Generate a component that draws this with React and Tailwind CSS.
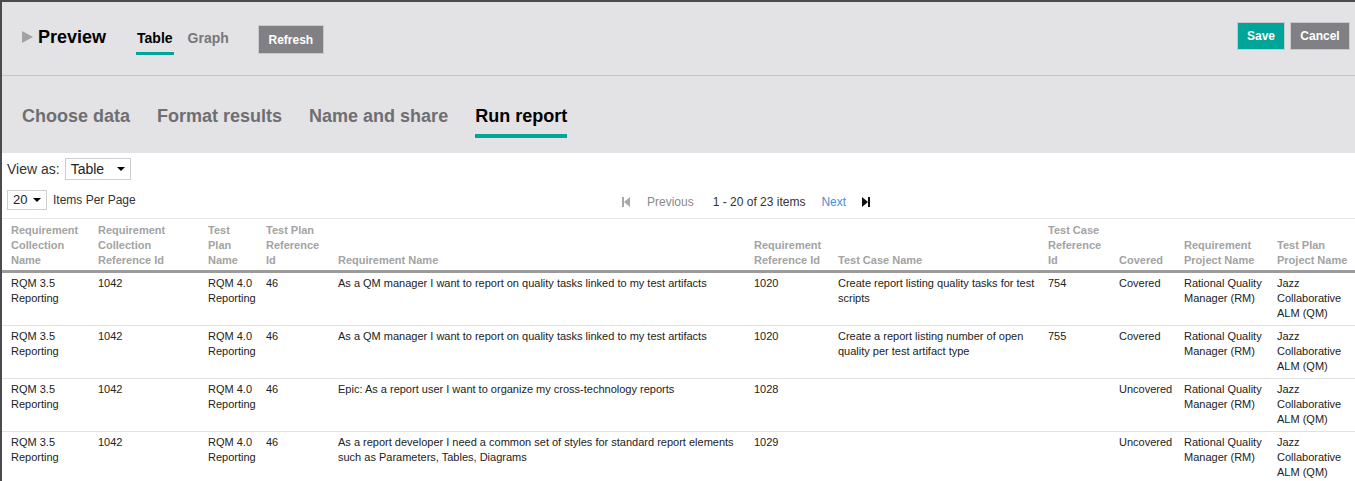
import React from "react";

const cols = [87, 110, 58, 72, 416, 84, 210, 71, 65, 93, 87];
const headers = [
  "Requirement Collection Name",
  "Requirement Collection Reference Id",
  "Test Plan Name",
  "Test Plan Reference Id",
  "Requirement Name",
  "Requirement Reference Id",
  "Test Case Name",
  "Test Case Reference Id",
  "Covered",
  "Requirement Project Name",
  "Test Plan Project Name",
];
const rows = [
  ["RQM 3.5 Reporting", "1042", "RQM 4.0 Reporting", "46", "As a QM manager I want to report on quality tasks linked to my test artifacts", "1020", "Create report listing quality tasks for test scripts", "754", "Covered", "Rational Quality Manager (RM)", "Jazz Collaborative ALM (QM)"],
  ["RQM 3.5 Reporting", "1042", "RQM 4.0 Reporting", "46", "As a QM manager I want to report on quality tasks linked to my test artifacts", "1020", "Create a report listing number of open quality per test artifact type", "755", "Covered", "Rational Quality Manager (RM)", "Jazz Collaborative ALM (QM)"],
  ["RQM 3.5 Reporting", "1042", "RQM 4.0 Reporting", "46", "Epic: As a report user I want to organize my cross-technology reports", "1028", "", "", "Uncovered", "Rational Quality Manager (RM)", "Jazz Collaborative ALM (QM)"],
  ["RQM 3.5 Reporting", "1042", "RQM 4.0 Reporting", "46", "As a report developer I need a common set of styles for standard report elements such as Parameters, Tables, Diagrams", "1029", "", "", "Uncovered", "Rational Quality Manager (RM)", "Jazz Collaborative ALM (QM)"],
];

function Caret() {
  return (
    <span className="inline-block w-0 h-0 border-l-[4px] border-r-[4px] border-t-[4px] border-l-transparent border-r-transparent border-t-black" />
  );
}

export default function App() {
  return (
    <div
      className="w-[1355px] h-[481px] overflow-hidden border-l-2 border-t-2 border-[#4b4b4f] bg-white text-[#222]"
      style={{ fontFamily: '"Liberation Sans", Arial, sans-serif' }}
    >
      {/* Top bar */}
      <div className="h-[74px] bg-[#e3e3e5] border-b border-[#c4c4c6] flex items-center justify-between">
        <div className="flex items-center pl-[20px]">
          <div className="flex items-center mb-[4px]">
            <svg width="11" height="12" viewBox="0 0 11 12" className="mr-[5px] mt-[1px]">
              <polygon points="0,0 11,6 0,12" fill="#a2a2a4" />
            </svg>
            <span className="text-[18px] font-bold text-black leading-none">Preview</span>
          </div>
          <div className="ml-[31px] flex items-center gap-[15px] h-[74px]">
            <div className="relative h-full flex items-center">
              <span className="text-[14px] font-bold text-black">Table</span>
              <span className="absolute left-[-1px] right-[-1px] top-[50px] h-[3px] bg-[#00a59a]" />
            </div>
            <span className="text-[14px] font-bold text-[#77777a]">Graph</span>
          </div>
          <button className="ml-[29px] mt-[2px] w-[66px] h-[29px] bg-[#818185] border border-[#c9c9cb] text-white text-[12px] font-bold">
            Refresh
          </button>
        </div>
        <div className="flex items-center gap-[5px] pr-[5px] mb-[5px]">
          <button className="w-[48px] h-[28px] bg-[#00a59a] border border-[#c9c9cb] text-white text-[12px] font-bold">Save</button>
          <button className="w-[60px] h-[28px] bg-[#818185] border border-[#c9c9cb] text-white text-[12px] font-bold">Cancel</button>
        </div>
      </div>

      {/* Steps */}
      <div className="h-[77px] bg-[#e3e3e5] flex items-start pl-[20px] gap-[27px] pt-[29px]">
        {["Choose data", "Format results", "Name and share"].map((s) => (
          <span key={s} className="text-[18px] font-bold text-[#6e6e73] leading-[22px]">{s}</span>
        ))}
        <div className="flex flex-col">
          <span className="text-[18px] font-bold text-black leading-[22px]">Run report</span>
          <span className="mt-[7px] h-[4px] bg-[#00a59a]" />
        </div>
      </div>

      {/* Controls */}
      <div className="pl-[5px] pt-[5px] flex items-center h-[27px]">
        <span className="text-[14px] text-[#333]">View as:</span>
        <div className="ml-[5px] w-[66px] h-[22px] border border-[#cfcfcf] flex items-center justify-between px-[5px]">
          <span className="text-[14px] text-[#222]">Table</span>
          <Caret />
        </div>
      </div>
      <div className="relative h-[39px] flex items-center pl-[5px] pt-[2px] border-b border-[#e6e6e6]">
        <div className="w-[40px] h-[20px] border border-[#cfcfcf] flex items-center justify-between px-[5px]">
          <span className="text-[13px] text-[#222]">20</span>
          <Caret />
        </div>
        <span className="ml-[6px] text-[12px] text-[#333]">Items Per Page</span>
        <div className="absolute left-[620px] top-[3px] h-full flex items-center text-[12px]">
          <svg width="8" height="10" viewBox="0 0 8 10">
            <rect x="0" y="0" width="2" height="10" fill="#a8a8a8" />
            <polygon points="8,0 2,5 8,10" fill="#a8a8a8" />
          </svg>
          <span className="ml-[17px] text-[#8a8a8a]">Previous</span>
          <span className="ml-[19px] text-[#333]">1 - 20 of 23 items</span>
          <span className="ml-[16px] text-[#4a8fd4]">Next</span>
          <svg width="8" height="10" viewBox="0 0 8 10" className="ml-[16px]">
            <polygon points="0,0 6,5 0,10" fill="#111" />
            <rect x="6" y="0" width="2" height="10" fill="#111" />
          </svg>
        </div>
      </div>

      {/* Table */}
      <table className="table-fixed border-collapse text-[11px] leading-[15px]" style={{ width: 1353 }}>
        <colgroup>
          {cols.map((w, i) => (
            <col key={i} style={{ width: w }} />
          ))}
        </colgroup>
        <thead>
          <tr className="border-b-[3px] border-[#9b9b9b]">
            {headers.map((h, i) => (
              <th key={i} className="align-bottom text-left font-bold text-[#a3a3a3] pl-[9px] pr-[2px] pt-[4px] pb-[2px]">
                {h}
              </th>
            ))}
          </tr>
        </thead>
        <tbody>
          {rows.map((r, ri) => (
            <tr key={ri} className="border-b border-[#e2e2e2]">
              {r.map((c, ci) => (
                <td key={ci} className="align-top text-[#222] pl-[9px] pr-[2px] pt-[3px] pb-[4px]">
                  {c}
                </td>
              ))}
            </tr>
          ))}
        </tbody>
      </table>
    </div>
  );
}
